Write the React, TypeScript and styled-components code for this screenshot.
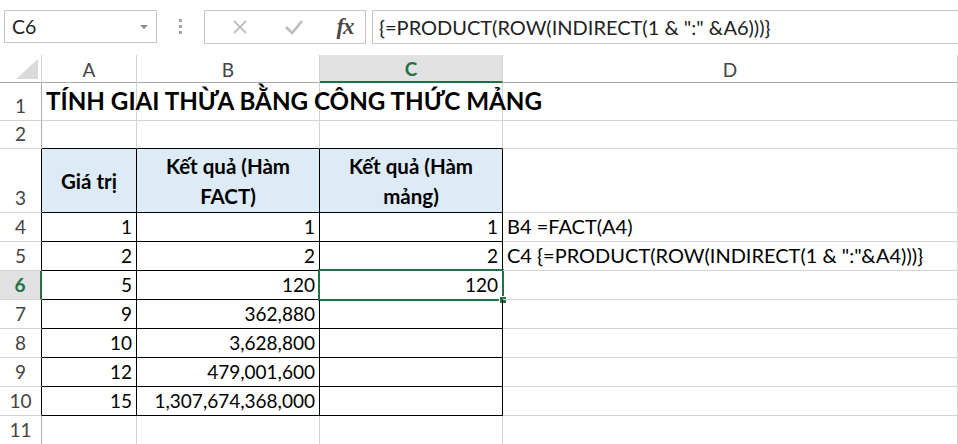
import React from 'react';
import styled, { createGlobalStyle } from 'styled-components';

const GlobalStyle = createGlobalStyle`
  html, body {
    margin: 0;
    padding: 0;
    background: #fff;
    overflow: hidden;
  }
  body {
    font-family: Lato, "Open Sans", sans-serif;
    color: #000;
  }
`;

const GREEN = '#217346';
const GRID = '#d4d4d4';

const Page = styled.div`
  width: 958px;
  height: 444px;
  overflow: hidden;
  background: #fff;
`;

// Formula bar
const TopBar = styled.div`
  height: 55px;
  display: flex;
  align-items: flex-start;
  padding: 10px 0 0 4px;
  box-sizing: border-box;
`;

const NameBox = styled.div`
  width: 153px;
  height: 33px;
  box-sizing: border-box;
  border: 1px solid #c6c6c6;
  display: flex;
  align-items: center;
  justify-content: space-between;
  padding: 0 8px 0 7px;
  font-size: 19.5px;
  color: #222;
`;

const DropArrow = styled.span`
  width: 0;
  height: 0;
  border-left: 4px solid transparent;
  border-right: 4px solid transparent;
  border-top: 4px solid #888;
`;

const Dots = styled.div`
  width: 47px;
  height: 33px;
  display: flex;
  flex-direction: column;
  align-items: center;
  justify-content: center;
  gap: 3px;
  span {
    width: 3px;
    height: 3px;
    background: #a6a6a6;
  }
`;

const FxBox = styled.div`
  width: 162px;
  height: 34px;
  box-sizing: border-box;
  border: 1px solid #c6c6c6;
  display: flex;
  align-items: center;
  padding: 0 0 0 17px;
`;

const FxIcon = styled.span<{ $w: number }>`
  width: ${(p) => p.$w}px;
  display: flex;
  justify-content: center;
  align-items: center;
`;

const FxText = styled.span`
  font-family: "Liberation Serif", "DejaVu Serif", serif;
  font-style: italic;
  font-weight: 700;
  font-size: 23px;
  color: #4a4a4a;
  letter-spacing: -1px;
`;

const FormulaInput = styled.div`
  flex: 1;
  height: 34px;
  margin-left: 6px;
  box-sizing: border-box;
  border-top: 1px solid #c6c6c6;
  border-bottom: 1px solid #c6c6c6;
  border-left: 1px solid #c6c6c6;
  display: flex;
  align-items: center;
  padding-left: 6px;
  font-size: 20px;
  color: #222;
  white-space: nowrap;
`;

// Sheet
const Sheet = styled.div`
  display: grid;
  grid-template-columns: 42px 95px 183px 183px 1fr;
  grid-template-rows: 28px 38px 28px 64px repeat(8, 29px);
`;

const Corner = styled.div`
  border-right: 1px solid ${GRID};
  border-bottom: 1px solid #ababab;
  box-sizing: border-box;
  display: flex;
  align-items: flex-end;
  justify-content: flex-end;
  padding: 0 3px 3px 0;
`;

const ColHead = styled.div<{ $sel?: boolean }>`
  box-sizing: border-box;
  border-right: 1px solid ${GRID};
  border-bottom: ${(p) => (p.$sel ? `2px solid ${GREEN}` : '1px solid #ababab')};
  background: ${(p) => (p.$sel ? '#e1e1e1' : '#fff')};
  color: ${(p) => (p.$sel ? GREEN : '#444')};
  font-weight: ${(p) => (p.$sel ? 700 : 400)};
  font-size: 19px;
  display: flex;
  align-items: center;
  justify-content: center;
  padding-top: 1px;
`;

const RowHead = styled.div<{ $sel?: boolean; $edge?: string }>`
  box-sizing: border-box;
  border-right: ${(p) => (p.$sel ? `2px solid ${GREEN}` : `1px solid ${p.$edge || '#ababab'}`)};
  border-bottom: 1px solid ${GRID};
  background: ${(p) => (p.$sel ? '#e1e1e1' : '#fff')};
  color: ${(p) => (p.$sel ? GREEN : '#444')};
  font-weight: ${(p) => (p.$sel ? 700 : 400)};
  font-size: 19px;
  display: flex;
  align-items: flex-end;
  justify-content: center;
  padding-bottom: 3px;
`;

const Cell = styled.div<{
  $right: string;
  $bottom: string;
  $align?: 'left' | 'right' | 'center';
  $fill?: string;
  $bold?: boolean;
  $size?: number;
  $middle?: boolean;
}>`
  position: relative;
  box-sizing: border-box;
  border-right: 1px solid ${(p) => p.$right};
  border-bottom: 1px solid ${(p) => p.$bottom};
  background: ${(p) => p.$fill || 'transparent'};
  font-size: ${(p) => p.$size || 19}px;
  font-weight: ${(p) => (p.$bold ? 700 : 400)};
  display: flex;
  align-items: ${(p) => (p.$middle ? 'center' : 'flex-end')};
  justify-content: ${(p) =>
    p.$align === 'right' ? 'flex-end' : p.$align === 'center' ? 'center' : 'flex-start'};
  text-align: ${(p) => p.$align || 'left'};
  padding: ${(p) => (p.$middle ? '0 4px' : '0 4px 3px 4px')};
  white-space: ${(p) => (p.$middle ? 'normal' : 'nowrap')};
  line-height: ${(p) => (p.$middle ? '30px' : 'normal')};
  z-index: ${(p) => (p.$align === 'left' ? 1 : 0)};
`;

const Selection = styled.div`
  position: absolute;
  left: -2px;
  top: -2px;
  right: -2px;
  bottom: -2px;
  border: 2px solid ${GREEN};
  pointer-events: none;
  z-index: 2;
`;

const Handle = styled.div`
  position: absolute;
  right: -5px;
  bottom: -5px;
  width: 6px;
  height: 6px;
  background: ${GREEN};
  border: 1px solid #fff;
`;

const Title = styled.span`
  font-size: 24.2px;
  font-weight: 700;
  white-space: nowrap;
  padding-bottom: 2px;
`;

type Row = {
  n: number;
  cells: (string | string[] | null)[];
};

const rows: Row[] = [
  { n: 1, cells: [null, null, null, null] },
  { n: 2, cells: [null, null, null, null] },
  { n: 3, cells: [['Giá trị'], ['Kết quả (Hàm', 'FACT)'], ['Kết quả (Hàm', 'mảng)'], null] },
  { n: 4, cells: ['1', '1', '1', 'B4 =FACT(A4)'] },
  { n: 5, cells: ['2', '2', '2', 'C4 {=PRODUCT(ROW(INDIRECT(1 & ":"&A4)))}'] },
  { n: 6, cells: ['5', '120', '120', null] },
  { n: 7, cells: ['9', '362,880', null, null] },
  { n: 8, cells: ['10', '3,628,800', null, null] },
  { n: 9, cells: ['12', '479,001,600', null, null] },
  { n: 10, cells: ['15', '1,307,674,368,000', null, null] },
  { n: 11, cells: [null, null, null, null] },
];

const inTable = (r: number, c: number) => c < 3 && r >= 3 && r <= 10;

export default function App() {
  return (
    <Page>
      <GlobalStyle />
      <TopBar>
        <NameBox>
          <span>C6</span>
          <DropArrow />
        </NameBox>
        <Dots>
          <span />
          <span />
          <span />
        </Dots>
        <FxBox>
          <FxIcon $w={36}>
            <svg width="16" height="16" viewBox="0 0 16 16">
              <path d="M2 2 L14 14 M14 2 L2 14" stroke="#bdbdbd" strokeWidth="1.8" fill="none" />
            </svg>
          </FxIcon>
          <FxIcon $w={72}>
            <svg width="20" height="16" viewBox="0 0 20 16">
              <path d="M2 8 L8 14 L18 2" stroke="#bdbdbd" strokeWidth="2.6" fill="none" />
            </svg>
          </FxIcon>
          <FxIcon $w={30}>
            <FxText>fx</FxText>
          </FxIcon>
        </FxBox>
        <FormulaInput>{'{=PRODUCT(ROW(INDIRECT(1 & ":" &A6)))}'}</FormulaInput>
      </TopBar>

      <Sheet>
        <Corner>
          <svg width="22" height="20" viewBox="0 0 22 20">
            <polygon points="22,0 22,20 0,20" fill="#dadada" />
          </svg>
        </Corner>
        <ColHead>A</ColHead>
        <ColHead>B</ColHead>
        <ColHead $sel>C</ColHead>
        <ColHead>D</ColHead>

        {rows.map((row) => (
          <React.Fragment key={row.n}>
            <RowHead $sel={row.n === 6} $edge={row.n >= 3 && row.n <= 10 ? '#000' : undefined}>
              {row.n}
            </RowHead>
            {[0, 1, 2, 3].map((c) => {
              const v = row.cells[c];
              const right = inTable(row.n, c) ? '#000' : GRID;
              const bottom = c < 3 && row.n >= 2 && row.n <= 10 ? '#000' : GRID;
              if (row.n === 1 && c === 0) {
                return (
                  <Cell key={c} $right={GRID} $bottom={GRID} $align="left">
                    <Title>TÍNH GIAI THỪA BẰNG CÔNG THỨC MẢNG</Title>
                  </Cell>
                );
              }
              if (Array.isArray(v)) {
                return (
                  <Cell
                    key={c}
                    $right={right}
                    $bottom={bottom}
                    $align="center"
                    $fill="#ddebf7"
                    $bold
                    $middle
                    $size={20.5}
                  >
                    <span>
                      {v.map((line, i) => (
                        <React.Fragment key={i}>
                          {i > 0 && <br />}
                          {line}
                        </React.Fragment>
                      ))}
                    </span>
                  </Cell>
                );
              }
              const isNum = c < 3;
              return (
                <Cell
                  key={c}
                  $right={right}
                  $bottom={bottom}
                  $align={isNum ? 'right' : 'left'}
                  $size={isNum ? 19 : 20}
                >
                  {v}
                  {row.n === 6 && c === 2 && (
                    <Selection>
                      <Handle />
                    </Selection>
                  )}
                </Cell>
              );
            })}
          </React.Fragment>
        ))}
      </Sheet>
    </Page>
  );
}
